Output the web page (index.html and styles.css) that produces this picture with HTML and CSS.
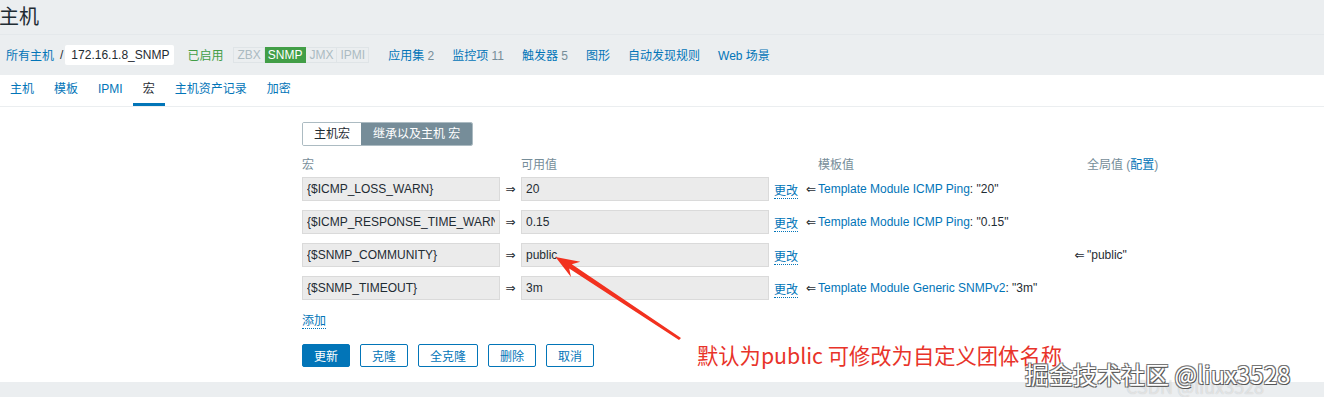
FILE: index.html
```html
<!DOCTYPE html>
<html lang="zh-CN">
<head>
  <meta charset="UTF-8">
  <title>主机 - 宏</title>
  <link rel="stylesheet" href="styles.css">
</head>
<body>
  <div class="page-title">
    <h1>主机</h1>
  </div>

  <div class="host-nav">
    <a class="crumb" href="#">所有主机</a>
    <span class="sep">/</span>
    <span class="host-name">172.16.1.8_SNMP</span>
    <span class="status-on">已启用</span>
    <span class="avail">
      <span>ZBX</span><span class="on">SNMP</span><span>JMX</span><span>IPMI</span>
    </span>
    <a class="nav-link" href="#">应用集 <span class="count">2</span></a>
    <a class="nav-link" href="#">监控项 <span class="count">11</span></a>
    <a class="nav-link" href="#">触发器 <span class="count">5</span></a>
    <a class="nav-link" href="#">图形</a>
    <a class="nav-link" href="#">自动发现规则</a>
    <a class="nav-link" href="#">Web 场景</a>
  </div>

  <div class="content">
    <ul class="tabs">
      <li><a href="#">主机</a></li>
      <li><a href="#">模板</a></li>
      <li><a href="#">IPMI</a></li>
      <li class="active"><a href="#">宏</a></li>
      <li><a href="#">主机资产记录</a></li>
      <li><a href="#">加密</a></li>
    </ul>

    <div class="macro-form">
      <div class="toggle">
        <span class="seg">主机宏</span>
        <span class="seg selected">继承以及主机 宏</span>
      </div>

      <!-- column headers -->
      <div class="macro-row head">
        <span>宏</span>
        <span></span>
        <span>可用值</span>
        <span></span>
        <span></span>
        <span>模板值</span>
        <span></span>
        <span>全局值 (<a href="#">配置</a>)</span>
      </div>

      <div class="macro-row">
        <input class="field" type="text" value="{$ICMP_LOSS_WARN}" readonly>
        <span class="arrow">&rArr;</span>
        <input class="field" type="text" value="20" readonly>
        <span class="change"><a href="#">更改</a></span>
        <span class="arrow">&lArr;</span>
        <span><a href="#">Template Module ICMP Ping</a>: "20"</span>
        <span></span>
        <span></span>
      </div>

      <div class="macro-row">
        <input class="field" type="text" value="{$ICMP_RESPONSE_TIME_WARN}" readonly>
        <span class="arrow">&rArr;</span>
        <input class="field" type="text" value="0.15" readonly>
        <span class="change"><a href="#">更改</a></span>
        <span class="arrow">&lArr;</span>
        <span><a href="#">Template Module ICMP Ping</a>: "0.15"</span>
        <span></span>
        <span></span>
      </div>

      <div class="macro-row">
        <input class="field" type="text" value="{$SNMP_COMMUNITY}" readonly>
        <span class="arrow">&rArr;</span>
        <input class="field" type="text" value="public" readonly>
        <span class="change"><a href="#">更改</a></span>
        <span></span>
        <span></span>
        <span class="arrow">&lArr;</span>
        <span>"public"</span>
      </div>

      <div class="macro-row">
        <input class="field" type="text" value="{$SNMP_TIMEOUT}" readonly>
        <span class="arrow">&rArr;</span>
        <input class="field" type="text" value="3m" readonly>
        <span class="change"><a href="#">更改</a></span>
        <span class="arrow">&lArr;</span>
        <span><a href="#">Template Module Generic SNMPv2</a>: "3m"</span>
        <span></span>
        <span></span>
      </div>

      <div class="add-row"><a class="dotted" href="#">添加</a></div>

      <div class="buttons">
        <button class="btn primary">更新</button>
        <button class="btn">克隆</button>
        <button class="btn">全克隆</button>
        <button class="btn">删除</button>
        <button class="btn">取消</button>
      </div>
    </div>
  </div>

  <div class="footer"></div>

  <!-- screenshot annotation -->
  <svg class="note-arrow" width="1324" height="397" viewBox="0 0 1324 397">
    <polygon fill="#f2311f" points="681,338 571.8,264.2 580.3,261.7 555.5,257 571,277.1 569.2,268.5 679,340"/>
  </svg>
  <div class="note-text">默认为public 可修改为自定义团体名称</div>
  <div class="watermark-back">CSDN @liux3528</div>
  <div class="watermark">掘金技术社区 @liux3528</div>
</body>
</html>
```

FILE: styles.css
```css
body {
  margin: 0;
  padding: 0;
  font-family: "Liberation Sans", Arial, "Noto Sans CJK SC", sans-serif;
  font-size: 12px;
  color: #1f2c33;
  background-color: #ebeef0;
  position: relative;
  height: 397px;
  overflow: hidden;
}
a {
  color: #0275b8;
  text-decoration: none;
}
.page-title {
  height: 34px;
  border-bottom: 1px solid #e4e8eb;
}
.page-title h1 {
  margin: 0 0 0 -1px;
  padding-top: 6px;
  font-size: 20px;
  font-weight: normal;
  line-height: 22px;
  color: #1f2c33;
}
.host-nav {
  display: flex;
  align-items: center;
  height: 39px;
  padding-left: 6px;
  white-space: nowrap;
}
.host-nav .sep {
  margin: 0 2px 0 6px;
  color: #1f2c33;
}
.host-nav .host-name {
  background-color: #fff;
  height: 20px;
  line-height: 20px;
  padding: 0 5px 0 6px;
  border-radius: 2px;
}
.host-nav .status-on {
  color: #429e47;
  margin-left: 13px;
}
.avail {
  display: flex;
  margin-left: 10px;
  margin-right: 19px;
}
.avail span {
  border: 1px solid #dfe4e7;
  color: #acbbc2;
  padding: 0 3px;
  line-height: 14px;
  font-size: 12px;
}
.avail span + span {
  border-left: none;
}
.avail span.on {
  background-color: #429e47;
  border-color: #429e47;
  color: #fff;
}
.nav-link {
  margin-right: 18px;
}
.nav-link .count {
  color: #768d99;
}
.content {
  background-color: #fff;
  margin-top: 1px;
  height: 307px;
}
.tabs {
  display: flex;
  list-style: none;
  margin: 0;
  padding: 0;
  border-bottom: 1px solid #ebeef0;
}
.tabs li {
  padding: 0 10px;
  height: 28px;
  line-height: 28px;
  border-bottom: 3px solid transparent;
}
.tabs li.active {
  border-bottom-color: #0275b8;
}
.tabs li.active a {
  color: #1f2c33;
}
.macro-form {
  padding: 15px 0 0 302px;
}
.toggle {
  display: inline-flex;
  border: 1px solid #acbbc2;
  border-radius: 2px;
  overflow: hidden;
  margin-bottom: 9px;
}
.toggle .seg {
  height: 22px;
  line-height: 22px;
  padding: 0 11px;
  background-color: #fff;
}
.toggle .seg.selected {
  background-color: #768d99;
  color: #fff;
  padding: 0 12px;
}
.macro-row {
  display: grid;
  grid-template-columns: 198px 21px 248px 35px 14px 254px 15px auto;
  align-items: center;
  height: 24px;
  margin-bottom: 9px;
  white-space: nowrap;
}
.macro-row.head {
  height: 14px;
  margin-bottom: 8px;
  color: #768d99;
}
.field {
  box-sizing: border-box;
  width: 100%;
  height: 24px;
  margin: 0;
  padding: 0 4px;
  border: 1px solid #dadada;
  background-color: #ebebeb;
  color: #1f2c33;
  font-family: "Liberation Sans", Arial, "Noto Sans CJK SC", sans-serif;
  font-size: 12px;
  outline: none;
}
.arrow {
  font-family: "DejaVu Sans", sans-serif;
  font-size: 12px;
  text-align: center;
}
.change {
  padding-left: 5px;
}
.change a, .dotted {
  border-bottom: 1px dotted #0275b8;
}
.add-row {
  margin-top: 14px;
  line-height: 14px;
}
.buttons {
  display: flex;
  gap: 10px;
  margin-top: 16px;
}
.btn {
  height: 23px;
  padding: 0 11px;
  border: 1px solid #0275b8;
  border-radius: 2px;
  background-color: #fff;
  color: #0275b8;
  font-family: "Liberation Sans", Arial, "Noto Sans CJK SC", sans-serif;
  font-size: 12px;
  cursor: pointer;
}
.btn.primary {
  background-color: #0275b8;
  color: #fff;
}
.footer {
  height: 16px;
}

/* annotation drawn on top of the screenshot */
.note-arrow {
  position: absolute;
  left: 0;
  top: 0;
  pointer-events: none;
}
.note-text {
  position: absolute;
  left: 697px;
  top: 341px;
  font-family: "Noto Sans CJK SC", sans-serif;
  font-size: 21.3px;
  line-height: 28px;
  color: #e8332a;
  white-space: nowrap;
}
.watermark, .watermark-back {
  position: absolute;
  font-family: "Noto Sans CJK SC", sans-serif;
  white-space: nowrap;
}
.watermark {
  left: 1025px;
  top: 359px;
  font-size: 24px;
  line-height: 30px;
  color: #fff;
  text-shadow: 1px 1px 0 #555, -1px -1px 0 #777, 1px -1px 0 #777, -1px 1px 0 #777;
}
.watermark-back {
  left: 1126px;
  top: 375px;
  font-size: 18px;
  line-height: 22px;
  color: rgba(255, 255, 255, 0.5);
  text-shadow: 0 0 1px rgba(0, 0, 0, 0.2);
}
```
